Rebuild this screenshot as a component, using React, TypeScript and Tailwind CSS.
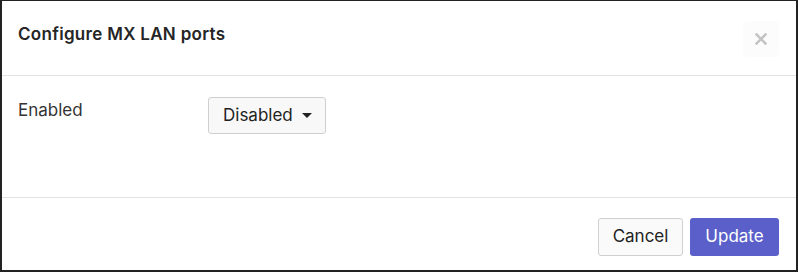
import React from "react";

export default function App() {
  return (
    <div className="w-[798px] h-[273px] bg-white" style={{ fontFamily: "Inter, 'Noto Sans', sans-serif" }}>
      <div className="w-[798px] h-[272px] border-l-2 border-t border-r-2 border-b-2 border-[#222] bg-white flex flex-col">
        <div className="h-[75px] flex items-start justify-between border-b border-[#e3e3e3] pl-[16px] pr-[17px]">
          <div className="pt-[21px] text-[17px] font-semibold text-[#252525] tracking-[0.3px]">Configure MX LAN ports</div>
          <div className="mt-[20px] w-[36px] h-[36px] bg-[#fcfcfc] rounded-sm flex items-center justify-center">
            <svg width="12" height="12" viewBox="0 0 12 12">
              <path d="M1.5 1.5 L10.5 10.5 M10.5 1.5 L1.5 10.5" stroke="#c4c4c4" strokeWidth="2.6" strokeLinecap="square" />
            </svg>
          </div>
        </div>
        <div className="h-[122px] border-b border-[#e3e3e3] flex items-start pl-[16px] pt-[21px]">
          <div className="w-[190px] pt-[1px] text-[17px] text-[#333]">Enabled</div>
          <button className="h-[37px] pl-[14px] pr-[13px] flex items-center gap-[9px] bg-[#f8f8f8] border border-[#cfcfcf] rounded-[3px] text-[17px] text-[#222]">
            Disabled
            <svg width="10" height="5" viewBox="0 0 10 5"><path d="M0 0 L10 0 L5 5 Z" fill="#222" /></svg>
          </button>
        </div>
        <div className="flex-1 flex justify-end items-start pt-[20px] pr-[17px] gap-[7px]">
          <button className="h-[38px] w-[85px] bg-[#fafafa] border border-[#cfcfcf] rounded-[3px] text-[17px] text-[#222]">Cancel</button>
          <button className="h-[38px] w-[89px] bg-[#5a5fc9] rounded-[3px] text-[17px] text-white">Update</button>
        </div>
      </div>
    </div>
  );
}
